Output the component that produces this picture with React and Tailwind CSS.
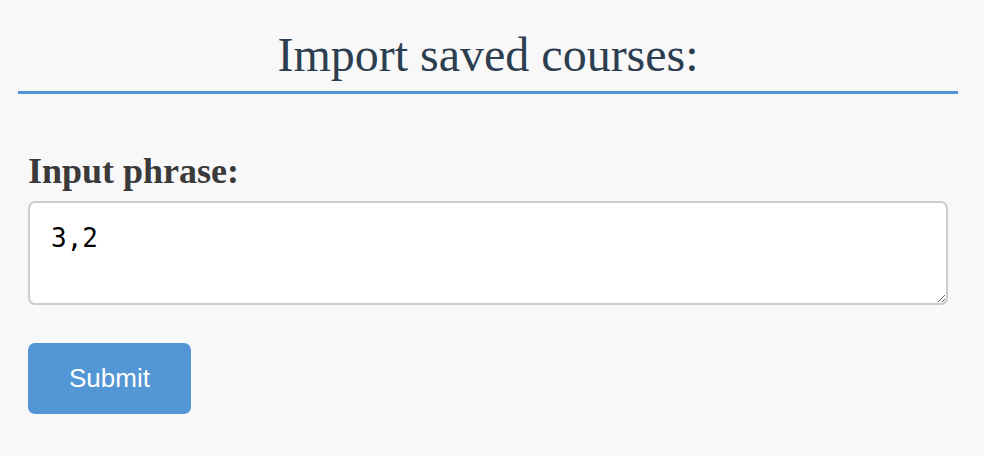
export default function App() {
  return (
    <div className="min-h-[456px] w-[984px] bg-[#f8f8f8] pl-[18px] pr-[26px] pt-[27px]">
      <h1 className="border-b-[3px] border-[#5096d6] pb-[8px] text-center font-['Liberation_Serif',serif] text-[48px] leading-[56px] font-normal text-[#2c3e50]">
        Import saved courses:
      </h1>
      <div className="flex flex-col items-start px-[10px] pt-[57px]">
        <label className="block font-['Liberation_Serif',serif] text-[36px] leading-[40px] font-bold text-[#3a3a3a]">
          Input phrase:
        </label>
        <textarea
          defaultValue="3,2"
          className="mt-[10px] block h-[104px] w-[920px] rounded-[7px] border-2 border-[#cccccc] bg-white px-[21px] pt-[20px] font-['DejaVu_Sans_Mono',monospace] text-[26px] leading-[30px] text-black outline-none"
        />
        <button className="mt-[38px] flex h-[71px] w-[163px] items-center justify-center rounded-[7px] bg-[#5296d5] font-['Liberation_Sans',Arial,sans-serif] text-[26px] text-white">
          Submit
        </button>
      </div>
    </div>
  );
}
